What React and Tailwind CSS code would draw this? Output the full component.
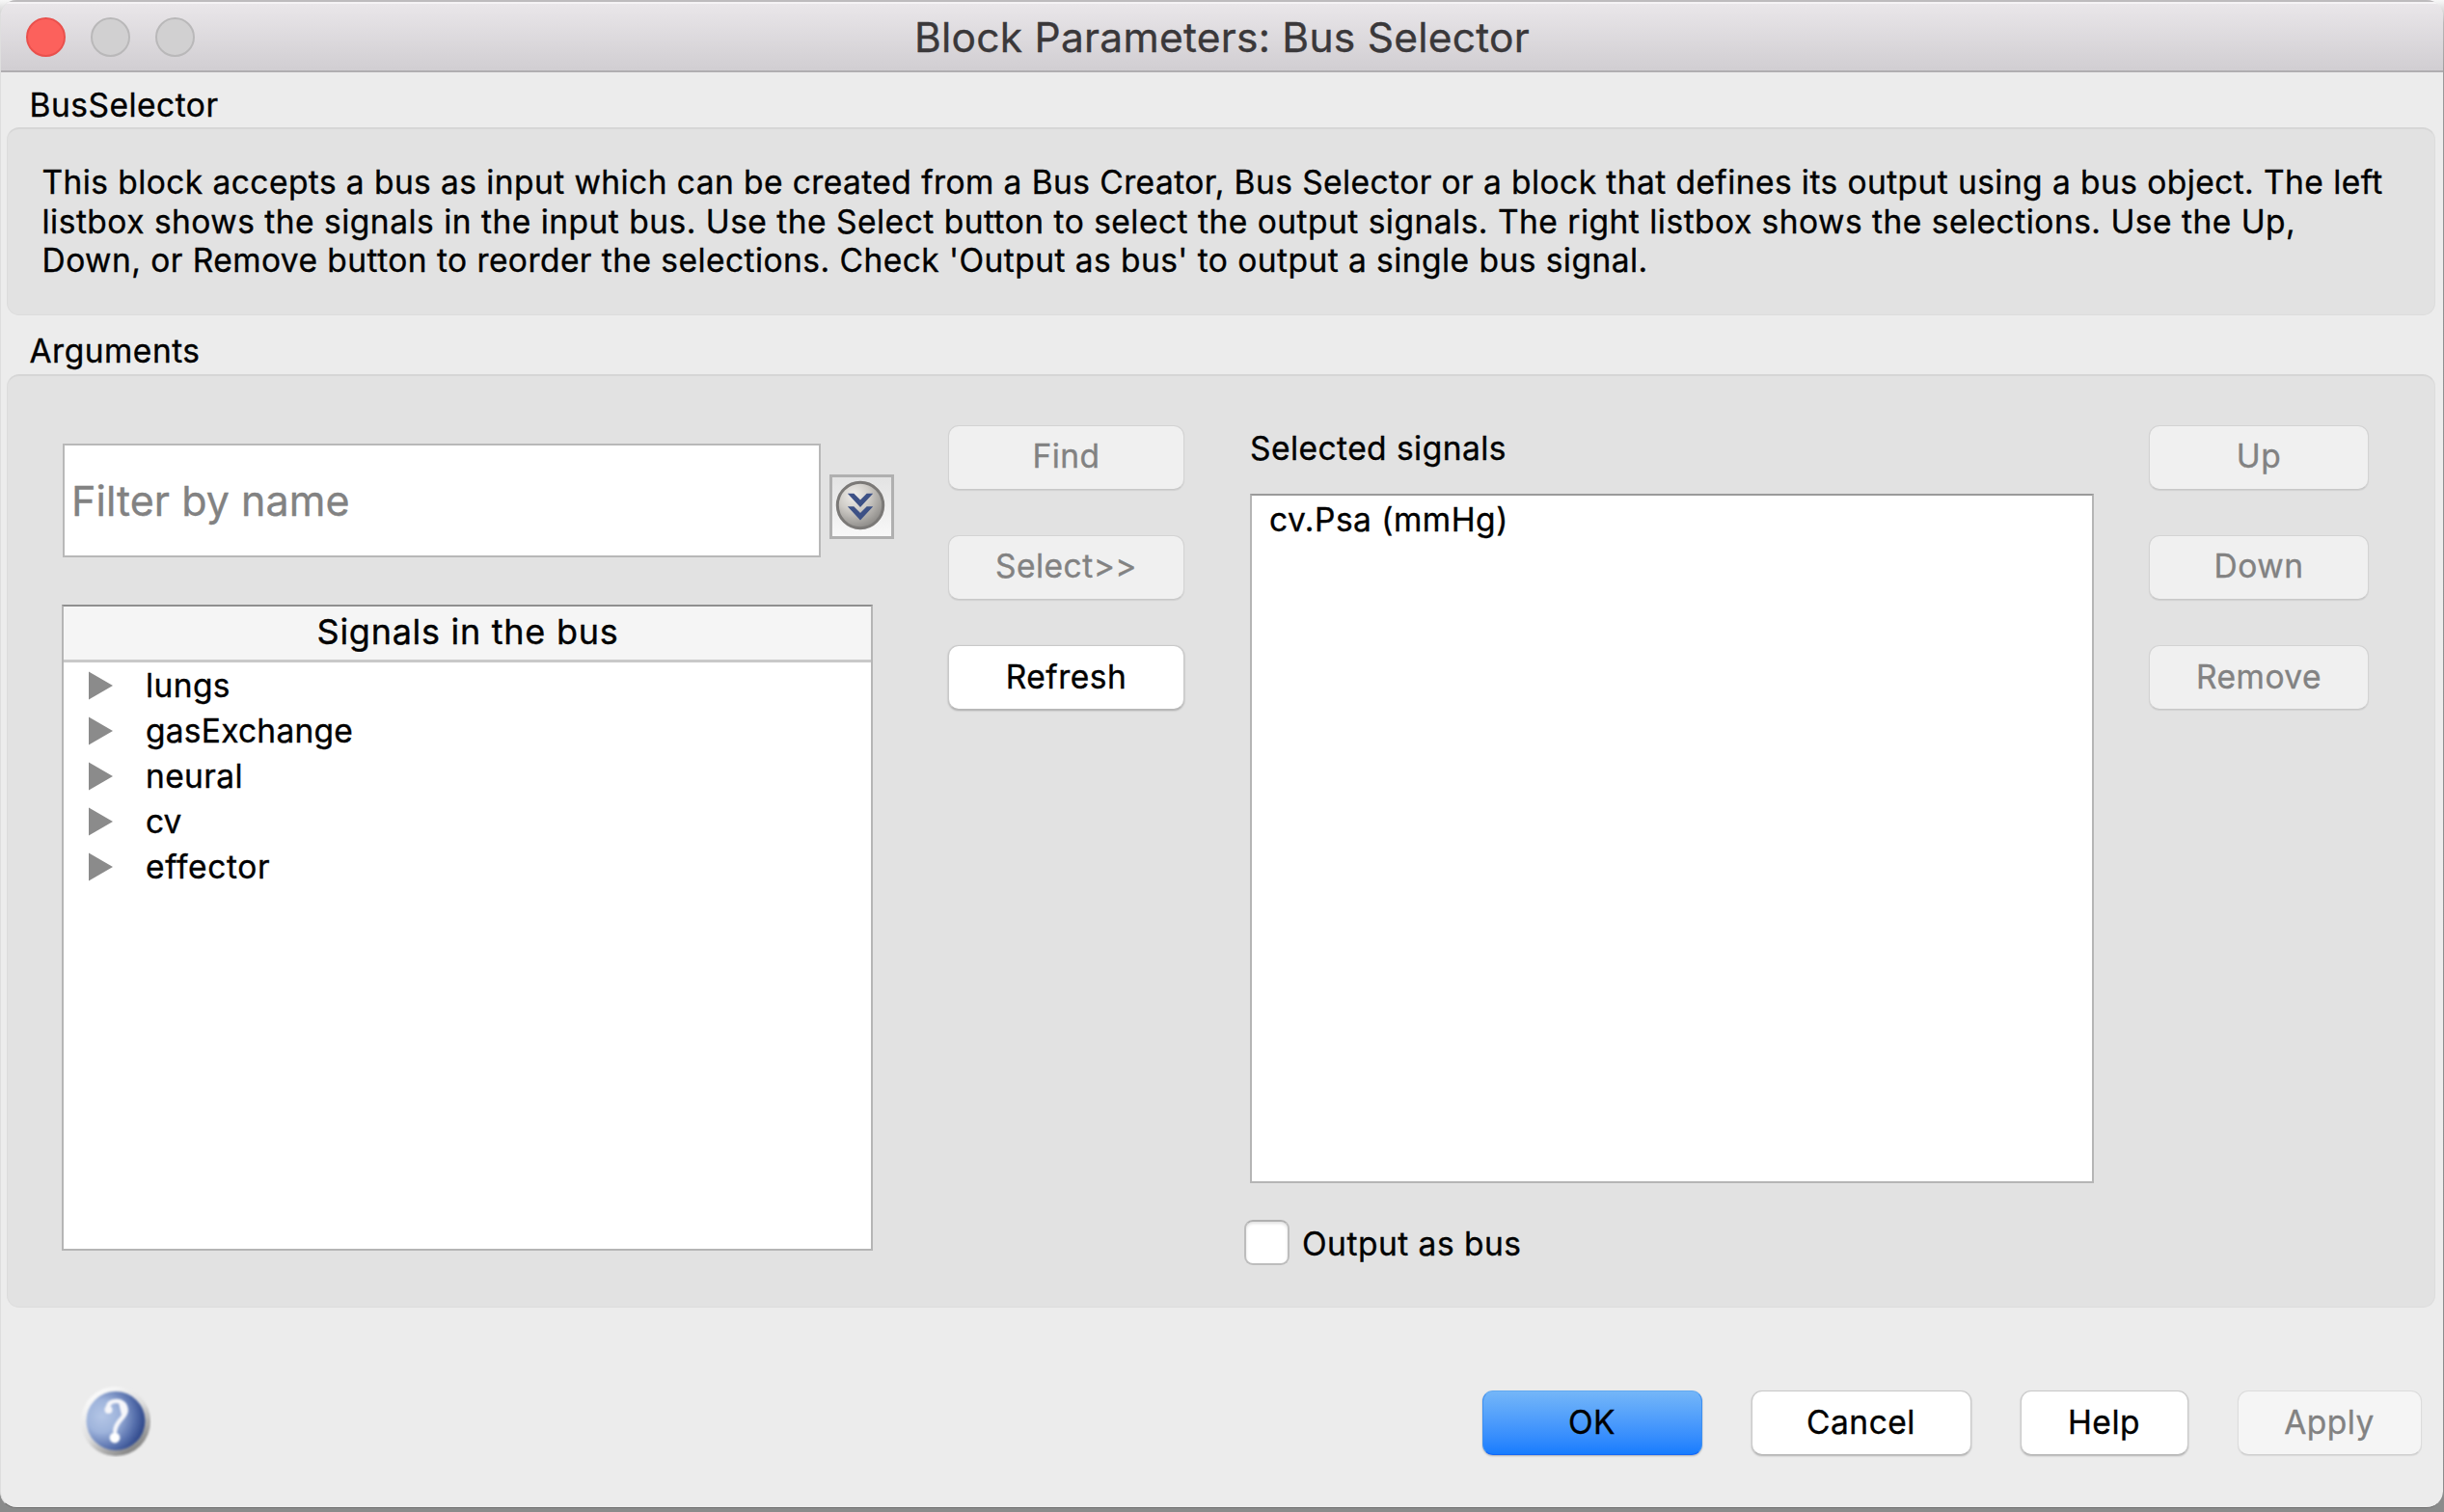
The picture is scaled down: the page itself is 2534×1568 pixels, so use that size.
import clsx from "clsx";

const LINES = [
  { text: "This block accepts a bus as input which can be created from a Bus Creator, Bus Selector or a block that defines its output using a bus object. The left", cls: "tracking-[0.43px]" },
  { text: "listbox shows the signals in the input bus. Use the Select button to select the output signals. The right listbox shows the selections. Use the Up,", cls: "tracking-[0.494px]" },
  { text: "Down, or Remove button to reorder the selections. Check 'Output as bus' to output a single bus signal.", cls: "tracking-[0.453px]" },
];

const SIGNALS = [
  { name: "lungs", cls: "tracking-[0.4px]" },
  { name: "gasExchange", cls: "tracking-[0.25px]" },
  { name: "neural", cls: "tracking-[0.4px]" },
  { name: "cv", cls: "tracking-[0px]" },
  { name: "effector", cls: "tracking-[0.65px]" },
];

function Button({ children, className, disabled, primary, onPanel }) {
  return (
    <button
      disabled={disabled}
      className={clsx(
        "flex h-[67px] shrink-0 items-center justify-center rounded-[11px] border pb-[2px]",
        primary && "border-[#3d8ff0] border-t-[#62a9f0] border-b-[#1568f5] bg-linear-to-b from-[#74b6f8] to-[#167cfe] text-black shadow-[0_1px_2px_rgba(0,0,0,0.25)]",
        !primary && !disabled && "border-[#c9c9c9] border-b-[#b8b8b8] bg-white text-black shadow-[0_1px_2px_rgba(0,0,0,0.25)]",
        disabled && onPanel && "border-[#d3d3d3] border-b-[#c8c8c8] bg-[#f0f0f0] text-[#828282] shadow-[0_1px_1px_rgba(0,0,0,0.08)]",
        disabled && !onPanel && "border-[#dcdcdc] border-b-[#cfcfcf] bg-[#f5f5f5] text-[#828282] shadow-[0_1px_1px_rgba(0,0,0,0.08)]",
        className
      )}
    >
      {children}
    </button>
  );
}

function ExpandIcon() {
  return (
    <svg width="52" height="52" viewBox="0 0 52 52" className="block">
      <defs>
        <radialGradient id="ball" cx="0.36" cy="0.28" r="0.75">
          <stop offset="0" stopColor="#f1efec" />
          <stop offset="0.45" stopColor="#cfccc7" />
          <stop offset="1" stopColor="#8b8986" />
        </radialGradient>
      </defs>
      <circle cx="26" cy="26" r="23.7" fill="url(#ball)" stroke="#7b7977" strokeWidth="3" />
      <path d="M14.5 14.5 L19 14.5 L26 21.500 L33 14.5 L37.500 14.500 L26 27 Z" fill="#3d5186" stroke="#3d5186" strokeWidth="1.5" />
      <path d="M14.5 28 L19 28 L26 35 L33 28 L37.500 28 L26 40.500 Z" fill="#3d5186" stroke="#3d5186" strokeWidth="1.5" />
    </svg>
  );
}

function HelpIcon() {
  return (
    <svg width="74" height="74" viewBox="0 0 74 74" className="block">
      <defs>
        <linearGradient id="rim" x1="0.2" y1="0.05" x2="0.8" y2="0.95">
          <stop offset="0" stopColor="#fdfdfd" />
          <stop offset="0.5" stopColor="#dedede" />
          <stop offset="1" stopColor="#7c7c7c" />
        </linearGradient>
        <radialGradient id="blue" cx="0.27" cy="0.42" r="0.78">
          <stop offset="0" stopColor="#b4c6e6" />
          <stop offset="0.35" stopColor="#9fb4dc" />
          <stop offset="0.72" stopColor="#566fac" />
          <stop offset="1" stopColor="#233c80" />
        </radialGradient>
        <filter id="soft" x="-10%" y="-10%" width="120%" height="120%">
          <feGaussianBlur stdDeviation="0.8" />
        </filter>
      </defs>
      <circle cx="37" cy="37" r="36" fill="url(#rim)" filter="url(#soft)" />
      <circle cx="37" cy="36.500" r="30.500" fill="url(#blue)" filter="url(#soft)" />
      <g filter="url(#soft)">
        <path d="M28.500 24 C29 18 33 16 37.500 16 C44 16 47.500 20 47.500 25.500 C47.500 33 37 36 36.200 47" fill="none" stroke="#f6f6fa" strokeWidth="4.5" strokeLinecap="round" />
        <circle cx="29.500" cy="25" r="4" fill="#f6f6fa" />
        <path d="M40 18 C47 18 50 22 49.500 27 C48.500 34 40 37 38 46 L43 31 Z" fill="#f6f6fa" />
        <circle cx="36" cy="54" r="5.400" fill="#fff" />
      </g>
    </svg>
  );
}

export default function App() {
  return (
    <div className="h-[1568px] w-[2534px] overflow-hidden bg-[linear-gradient(to_bottom,#f8f8f8_0px,#b8b8b8_24px,#9a9a9a_80px,#8f9090_200px,#8a8b8b_100%)] pr-[1px] pb-[4px] font-['Inter',sans-serif] text-[33.5px] leading-[40px] tracking-[0.5px] text-black [-webkit-text-stroke:0.35px_currentColor]">
      <div className="flex h-full flex-col overflow-hidden rounded-[17px] border-b border-l border-b-[#6f6f6f] border-l-[#dedede] bg-[#ececec]">
        <header className="grid h-[75px] shrink-0 grid-cols-[1fr_auto_1fr] items-center border-t-2 border-b-2 border-t-[#bdbbbd] border-b-[#b0aeb1] bg-linear-to-b from-[#eae7ea] to-[#d1ced2] shadow-[inset_0_2px_0_#f5f3f5]">
          <div className="flex gap-[26px] pl-[25.5px] pt-[2px]">
            <span className="size-[41px] rounded-full border-2 border-[#e9504c] bg-[#fc615c]" />
            <span className="size-[41px] rounded-full border-2 border-[#b9b8b9] bg-[#d1d0d1]" />
            <span className="size-[41px] rounded-full border-2 border-[#b9b8b9] bg-[#d1d0d1]" />
          </div>
          <h1 className="pt-[3px] text-[42.5px] leading-[52px] tracking-[0.25px] text-[#3a383a]">Block Parameters: Bus Selector</h1>
          <div />
        </header>

        <h2 className="mt-[14px] ml-[29.5px] shrink-0">BusSelector</h2>
        <section className="mt-[3px] mr-[8px] ml-[6px] h-[195px] shrink-0 rounded-[13px] border border-[#dcdcdc] border-t-2 border-t-[#d6d6d6] bg-[#e2e2e2] pt-[35px] pl-[35.500px] leading-[40.5px] whitespace-nowrap">
          {LINES.map((l, i) => (
            <p key={i} className={l.cls}>{l.text}</p>
          ))}
        </section>

        <h2 className="mt-[17px] ml-[29.5px] shrink-0">Arguments</h2>
        <section className="mt-[4px] mr-[8px] ml-[6px] flex h-[968px] shrink-0 rounded-[13px] border border-[#dcdcdc] border-t-2 border-t-[#d6d6d6] bg-[#e2e2e2]">
          <div className="ml-[56px] w-[863px] shrink-0 pt-[70px]">
            <div className="flex">
              <div className="ml-px flex h-[118px] w-[786px] items-center border-2 border-[#b8b8b8] bg-white pl-[7px] text-[43px] leading-[52px] tracking-[0.05px] text-[#828282]">
                Filter by name
              </div>
              <div className="mt-[32px] ml-[9px] flex size-[67px] items-center justify-center border-3 border-[#b0b0b0] bg-linear-to-b from-[#e3e3e3] to-[#f8f8f8] pr-[4px] pb-[3px]">
                <ExpandIcon />
              </div>
            </div>
            <div className="mt-[49px] h-[670px] w-[841px] border-2 border-[#b5b5b5] border-t-[#8f8f8f] bg-white">
              <div className="flex h-[58px] items-center justify-center border-b-3 border-[#c9c9c9] bg-[#f5f5f5] pb-[3px] pl-px text-[36px] leading-[44px] tracking-[0.72px]">
                Signals in the bus
              </div>
              <ul>
                {SIGNALS.map((s) => (
                  <li key={s.name} className={clsx("flex h-[47.1px] items-center pl-[26px]", s.cls)}>
                    <svg width="25" height="30" viewBox="0 0 25 30" className="mr-[34px] block">
                      <path d="M0 0.500 L25 15 L0 29.500 Z" fill="#8b8b8b" />
                    </svg>
                    <span>{s.name}</span>
                  </li>
                ))}
              </ul>
            </div>
          </div>

          <div className="ml-[56px] flex w-[245px] shrink-0 flex-col gap-[47.3px] pt-[50.500px]">
            <Button disabled onPanel>Find</Button>
            <Button disabled onPanel>Select&gt;&gt;</Button>
            <Button>Refresh</Button>
          </div>

          <div className="ml-[68px] w-[875px] shrink-0 pt-[55px]">
            <div className="tracking-[0.45px]">Selected signals</div>
            <div className="mt-[27px] h-[715px] border-2 border-[#b5b5b5] border-t-[#9a9a9a] bg-white pt-[5px] pl-[18px]">
              cv.Psa (mmHg)
            </div>
            <label className="-ml-[6px] mt-[38px] flex items-center">
              <span className="size-[47px] rounded-[9px] border-2 border-[#bdbdbd] border-t-[#b0b0b0] bg-white shadow-[inset_0_2px_3px_rgba(0,0,0,0.12)]" />
              <span className="ml-[13px] pt-[2px]">Output as bus</span>
            </label>
          </div>

          <div className="ml-[57px] flex w-[228px] shrink-0 flex-col gap-[47.3px] pt-[50.500px]">
            <Button disabled onPanel>Up</Button>
            <Button disabled onPanel>Down</Button>
            <Button disabled onPanel>Remove</Button>
          </div>
        </section>

        <footer className="flex flex-1 items-start pt-[81px] pr-[22.500px] pl-[82px]">
          <HelpIcon />
          <div className="ml-auto flex gap-[51px] pt-[5px]">
            <Button primary className="w-[228px]">OK</Button>
            <Button className="w-[228px]">Cancel</Button>
            <Button className="w-[174px]">Help</Button>
            <Button disabled className="w-[191px]">Apply</Button>
          </div>
        </footer>
      </div>
    </div>
  );
}
